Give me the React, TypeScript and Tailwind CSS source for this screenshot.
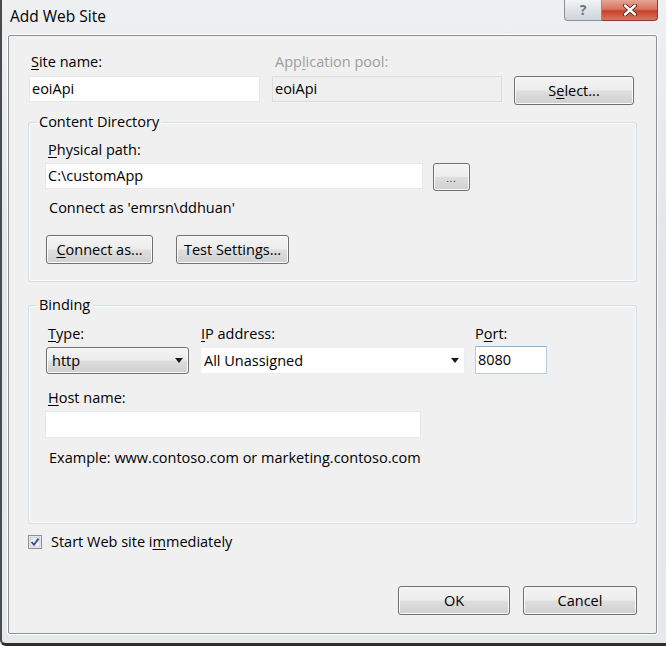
import React from "react";

const face =
  "rounded-[3px] border border-[#707070] bg-[linear-gradient(to_bottom,#f4f4f4_0%,#ececec_48%,#dedede_52%,#d0d0d0_100%)] shadow-[inset_0_0_0_1px_#fbfbfb] text-black";
const btn = `flex items-center justify-center ${face}`;

function Arrow() {
  return (
    <svg width="8" height="5" viewBox="0 0 8 5">
      <path d="M0 0H8L4 5Z" fill="#1a1a1a" />
    </svg>
  );
}

function Label({ children, dim }: { children: React.ReactNode; dim?: boolean }) {
  return (
    <div className={`h-[20px] leading-[20px] ${dim ? "text-[#9d9d9d]" : "text-black"}`}>{children}</div>
  );
}

export default function App() {
  return (
    <div className="w-[666px] h-[646px] overflow-hidden bg-[linear-gradient(to_bottom,#eef0f2,#e2e6ea_40%,#e6e9ec)] font-['Open_Sans',sans-serif] text-[14.5px] text-black border-l-[2px] border-l-[#4a4a4a] border-b-[3px] border-b-[#2e2e2e] rounded-bl-[6px] flex flex-col">
      {/* title bar */}
      <div className="h-[35px] flex items-start justify-between pl-[8px] pr-[8px]">
        <div className="pt-[5px] text-[15.5px] leading-[22px] text-black">Add Web Site</div>
        <div className="flex">
          <div className="w-[38px] h-[21px] flex items-center justify-center border border-[#8a8f96] border-t-0 rounded-bl-[4px] bg-[linear-gradient(to_bottom,#f2f4f6,#dfe3e8_50%,#cfd5dc)] text-[#6b7480] text-[14px] font-bold leading-none">
            ?
          </div>
          <div className="w-[56px] h-[21px] flex items-center justify-center border border-[#8a3a30] border-t-0 border-l-0 rounded-br-[4px] bg-[linear-gradient(to_bottom,#e8a493,#d77560_45%,#c7412c_55%,#d9765f)]">
            <svg width="16" height="12" viewBox="0 0 16 12">
              <path d="M3 1.5L13 10.5M13 1.5L3 10.5" stroke="#5b2218" strokeWidth="4.2" strokeLinecap="round" />
              <path d="M3 1.5L13 10.5M13 1.5L3 10.5" stroke="#ffffff" strokeWidth="2.4" strokeLinecap="round" />
            </svg>
          </div>
        </div>
      </div>

      {/* client area */}
      <div className="ml-[6px] w-[649px] h-[599px] border border-[#8e8f8f] rounded-[2px] bg-[#f0f0f0] shadow-[0_0_0_1px_#ffffff] pl-[19px] pt-[16px] flex flex-col">
        {/* row 1 */}
        <div className="flex items-start">
          <div className="w-[231px] ml-[1px]">
            <div className="pl-[2px]">
              <Label>
                <u className="underline-offset-2">S</u>ite name:
              </Label>
            </div>
            <div className="mt-[4px] h-[26px] bg-white border border-[#e6e8eb] px-[2px] leading-[24px]">eoiApi</div>
          </div>
          <div className="w-[230px] ml-[12px]">
            <div className="pl-[3px]">
              <Label dim>
                App<u className="underline-offset-2">l</u>ication pool:
              </Label>
            </div>
            <div className="mt-[4px] h-[26px] bg-[#efefef] border border-[#dcdcdc] px-[2px] leading-[24px]">eoiApi</div>
          </div>
          <button className={`${btn} ml-[12px] mt-[24px] w-[120px] h-[29px]`}>
            S<u className="underline-offset-2">e</u>lect...
          </button>
        </div>

        {/* content directory */}
        <fieldset className="mt-[7px] w-[609px] h-[170px] border border-[#d5dfe5] rounded-[3px] shadow-[inset_0_0_0_1px_#fafafa] px-[16px]">
          <legend className="ml-[-8px] px-[2px] h-[20px] leading-[20px]">Content Directory</legend>
          <div className="pt-[8px] pl-[3px]">
            <Label>
              <u className="underline-offset-2">P</u>hysical path:
            </Label>
          </div>
          <div className="mt-[3px] flex items-start">
            <div className="w-[378px] h-[26px] bg-white border border-[#e6e8eb] px-[2px] leading-[24px]">C:\customApp</div>
            <button className={`${btn} ml-[10px] w-[37px] h-[28px] text-[9px] tracking-[1px] text-[#555] pt-[4px]`}>...</button>
          </div>
          <div className="mt-[7px] pl-[4px]">
            <Label>Connect as 'emrsn\ddhuan'</Label>
          </div>
          <div className="mt-[17px] flex">
            <button className={`${btn} ml-[1px] w-[107px] h-[29px]`}>
              <u className="underline-offset-2">C</u>onnect as...
            </button>
            <button className={`${btn} ml-[23px] w-[113px] h-[29px]`}>
              Test Settin<u className="underline-offset-2">g</u>s...
            </button>
          </div>
        </fieldset>

        {/* binding */}
        <fieldset className="mt-[13px] w-[609px] h-[229px] border border-[#d5dfe5] rounded-[3px] shadow-[inset_0_0_0_1px_#fafafa] px-[16px]">
          <legend className="ml-[-8px] px-[2px] h-[20px] leading-[20px]">Binding</legend>
          <div className="pt-[9px] flex items-start">
            <div className="w-[143px] ml-[1px]">
              <div className="pl-[2px]">
                <Label>
                  <u className="underline-offset-2">T</u>ype:
                </Label>
              </div>
              <div className={`${face} mt-[3px] h-[27px] flex items-center justify-between pl-[5px] pr-[5px]`}>
                <span>http</span>
                <Arrow />
              </div>
            </div>
            <div className="w-[265px] ml-[11px]">
              <div className="pl-[1px]">
                <Label>
                  <u className="underline-offset-2">I</u>P address:
                </Label>
              </div>
              <div className="mt-[3px] h-[27px] bg-white border border-[#eceef0] flex items-center justify-between pl-[3px] pr-[5px]">
                <span>All Unassigned</span>
                <Arrow />
              </div>
            </div>
            <div className="w-[72px] ml-[10px]">
              <Label>
                P<u className="underline-offset-2">o</u>rt:
              </Label>
              <div className="mt-[2px] h-[28px] bg-white border border-[#b7cde0] border-t-[#97b3cc] px-[2px] leading-[26px]">8080</div>
            </div>
          </div>
          <div className="mt-[14px] pl-[3px]">
            <Label>
              <u className="underline-offset-2">H</u>ost name:
            </Label>
          </div>
          <div className="mt-[3px] w-[376px] h-[27px] bg-white border border-[#e6e8eb]" />
          <div className="mt-[10px] pl-[4px]">
            <Label>Example: www.contoso.com or marketing.contoso.com</Label>
          </div>
        </fieldset>

        {/* start checkbox */}
        <div className="mt-[8px] flex items-center h-[20px]">
          <svg width="14" height="14" viewBox="0 0 14 14" className="shrink-0">
            <defs>
              <linearGradient id="cb" x1="0" y1="0" x2="1" y2="1">
                <stop offset="0" stopColor="#dfe5ee" />
                <stop offset="1" stopColor="#f6f8fb" />
              </linearGradient>
            </defs>
            <rect x="0.5" y="0.5" width="13" height="13" fill="#ffffff" stroke="#8e8f8f" />
            <rect x="2" y="2" width="10" height="10" fill="url(#cb)" stroke="#b3bfcf" strokeWidth="0.8" />
            <path d="M3.6 7L6 9.8L10.6 3.6" fill="none" stroke="#3b4f86" strokeWidth="1.8" />
          </svg>
          <span className="ml-[9px]">
            Start Web site i<u className="underline-offset-2">m</u>mediately
          </span>
        </div>

        {/* dialog buttons */}
        <div className="mt-[34px] flex justify-end pr-[19px]">
          <button className={`${btn} w-[112px] h-[29px] border-[#3c7fb1] shadow-[inset_0_0_0_1px_#bfe4f8,inset_0_0_0_2px_#e6f3fb]`}>OK</button>
          <button className={`${btn} ml-[13px] w-[114px] h-[29px]`}>Cancel</button>
        </div>
      </div>
    </div>
  );
}
